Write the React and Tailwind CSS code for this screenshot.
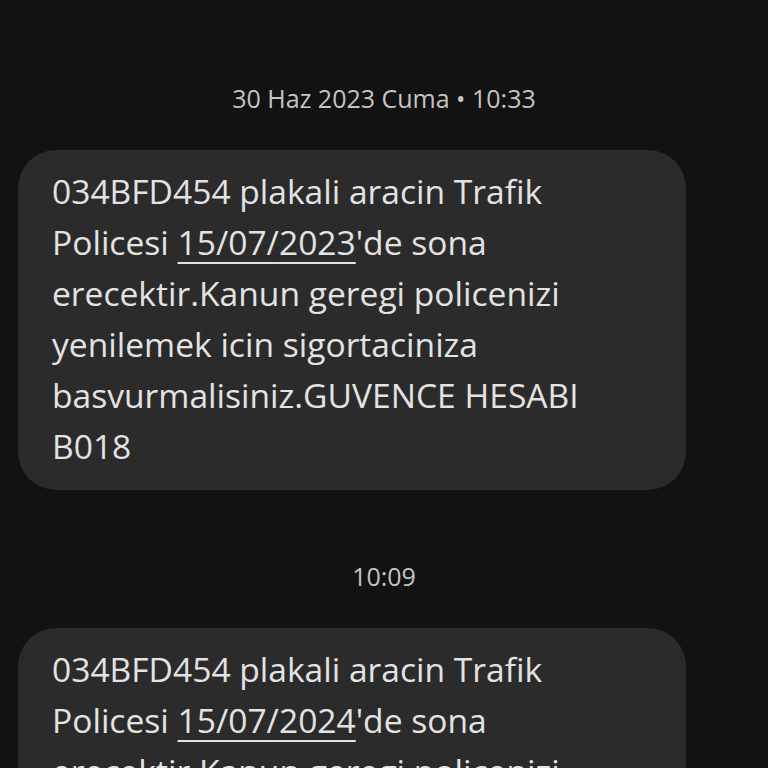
const lines = (year) => [
  "034BFD454 plakali aracin Trafik",
  <>
    Policesi <span className="underline decoration-2 underline-offset-[7px]">15/07/{year}</span>'de sona
  </>,
  "erecektir.Kanun geregi policenizi",
  "yenilemek icin sigortaciniza",
  "basvurmalisiniz.GUVENCE HESABI",
  "B018",
];

function Bubble({ year }) {
  return (
    <div className="ml-[18px] w-[668px] rounded-[38px] bg-[#2b2b2b] pl-[34px] pr-[24px] pt-[16px] pb-[18px] text-[33.6px] leading-[51px]">
      {lines(year).map((l, i) => (
        <div key={i} className="whitespace-nowrap">
          {l}
        </div>
      ))}
    </div>
  );
}

export default function App() {
  const font = { fontFamily: "'Open Sans', Roboto, sans-serif" };
  return (
    <div className="w-[768px] h-[768px] overflow-hidden bg-[#121212] text-[#e3e3e3]" style={font}>
      <div className="pt-[82px] pb-[36px] text-center text-[25px] leading-[32px] text-[#c4c4c4]">
        30 Haz 2023 Cuma • 10:33
      </div>
      <Bubble year="2023" />
      <div className="pt-[70px] pb-[36px] text-center text-[25px] leading-[32px] text-[#c4c4c4]">10:09</div>
      <Bubble year="2024" />
    </div>
  );
}
